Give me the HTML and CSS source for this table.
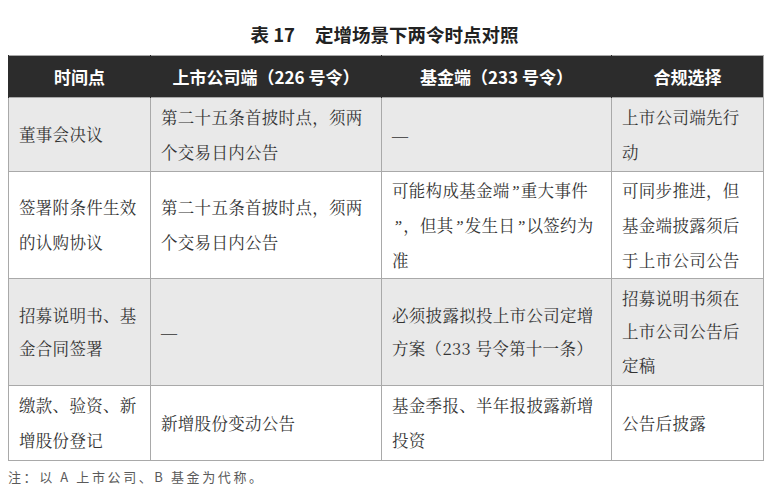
FILE: index.html
```html
<!DOCTYPE html>
<html lang="zh-CN">
<head>
<meta charset="utf-8">
<title>表 17 定增场景下两令时点对照</title>
<link rel="stylesheet" href="styles.css">
</head>
<body>
<div class="page">
  <h1 class="title">表 17<span class="gap"></span>定增场景下两令时点对照</h1>
  <table class="cmp">
    <colgroup>
      <col class="c1"><col class="c2"><col class="c3"><col class="c4">
    </colgroup>
    <thead>
      <tr class="head">
        <th>时间点</th>
        <th>上市公司端（226 号令）</th>
        <th>基金端（233 号令）</th>
        <th>合规选择</th>
      </tr>
    </thead>
    <tbody>
      <tr class="r1 shade">
        <td>董事会决议</td>
        <td>第二十五条首披时点，须两<br>个交易日内公告</td>
        <td><span class="dash">—</span></td>
        <td>上市公司端先行<br>动</td>
      </tr>
      <tr class="r2">
        <td>签署附条件生效<br>的认购协议</td>
        <td>第二十五条首披时点，须两<br>个交易日内公告</td>
        <td>可能构成基金端<span class="q">”</span>重大事件<br><span class="q">”</span>，但其<span class="q">”</span>发生日<span class="q">”</span>以签约为<br>准</td>
        <td>可同步推进，但<br>基金端披露须后<br>于上市公司公告</td>
      </tr>
      <tr class="r3 shade">
        <td>招募说明书、基<br>金合同签署</td>
        <td><span class="dash">—</span></td>
        <td>必须披露拟投上市公司定增<br>方案（233 号令第十一条）</td>
        <td>招募说明书须在<br>上市公司公告后<br>定稿</td>
      </tr>
      <tr class="r4">
        <td>缴款、验资、新<br>增股份登记</td>
        <td>新增股份变动公告</td>
        <td>基金季报、半年报披露新增<br>投资</td>
        <td>公告后披露</td>
      </tr>
    </tbody>
  </table>
  <p class="note">注：以 A 上市公司、B 基金为代称。</p>
</div>
</body>
</html>
```

FILE: styles.css
```css
html, body {
  margin: 0;
  padding: 0;
  background: #ffffff;
}
.page {
  width: 771px;
  height: 492px;
  padding: 0 8px;
  box-sizing: border-box;
  font-family: "Noto Serif CJK SC", "Liberation Serif", "Noto Sans CJK SC", serif;
  color: #2e2e2e;
}
.title {
  margin: 0;
  height: 55px;
  padding-top: 22px;
  box-sizing: border-box;
  text-align: center;
  font-family: "Noto Sans CJK SC", "Liberation Sans", sans-serif;
  font-size: 18.5px;
  line-height: 24px;
  font-weight: 700;
  color: #222;
  padding-right: 2px;
}
.gap {
  display: inline-block;
  width: 20px;
}
.cmp {
  width: 755px;
  table-layout: fixed;
  border-collapse: collapse;
  border: 1px solid #a9a9a9;
}
.c1 { width: 142px; }
.c2 { width: 231px; }
.c3 { width: 230px; }
.c4 { width: 152px; }
.head {
  height: 42px;
  background: #2c2c2c;
}
.head th {
  color: #ffffff;
  font-family: "Noto Sans CJK SC", "Liberation Sans", sans-serif;
  font-size: 17px;
  font-weight: 700;
  text-align: center;
  padding: 0;
  border-left: 1px solid #2c2c2c;
}
.cmp td {
  border: 1px solid #a9a9a9;
  padding: 0 6px 0 10px;
  vertical-align: middle;
  font-family: "Noto Serif CJK SC", "Noto Sans CJK SC", serif;
  font-size: 16.5px;
  font-weight: 400;
  line-height: 35px;
  letter-spacing: 0.3px;
  color: #333;
  white-space: nowrap;
}
.q {
  font-family: "Liberation Serif", serif;
  font-style: italic;
  letter-spacing: 0;
  line-height: 0;
  padding: 0 1px;
}
.dash {
  font-family: "Liberation Serif", serif;
  font-size: 16px;
  line-height: 0;
  color: #555;
}
.shade td {
  background: #e9e9e9;
}
.r1 { height: 74px; }
.r2 { height: 107px; }
.r2 td { line-height: 35px; }
.r3 { height: 107px; }
.r3 td { line-height: 33.5px; }
.r4 { height: 75px; }
.note {
  margin: 7px 0 0 0;
  font-family: "Noto Sans CJK SC", "Liberation Sans", sans-serif;
  font-size: 13px;
  line-height: 18px;
  letter-spacing: 2.6px;
  color: #5a5a5a;
}
```
